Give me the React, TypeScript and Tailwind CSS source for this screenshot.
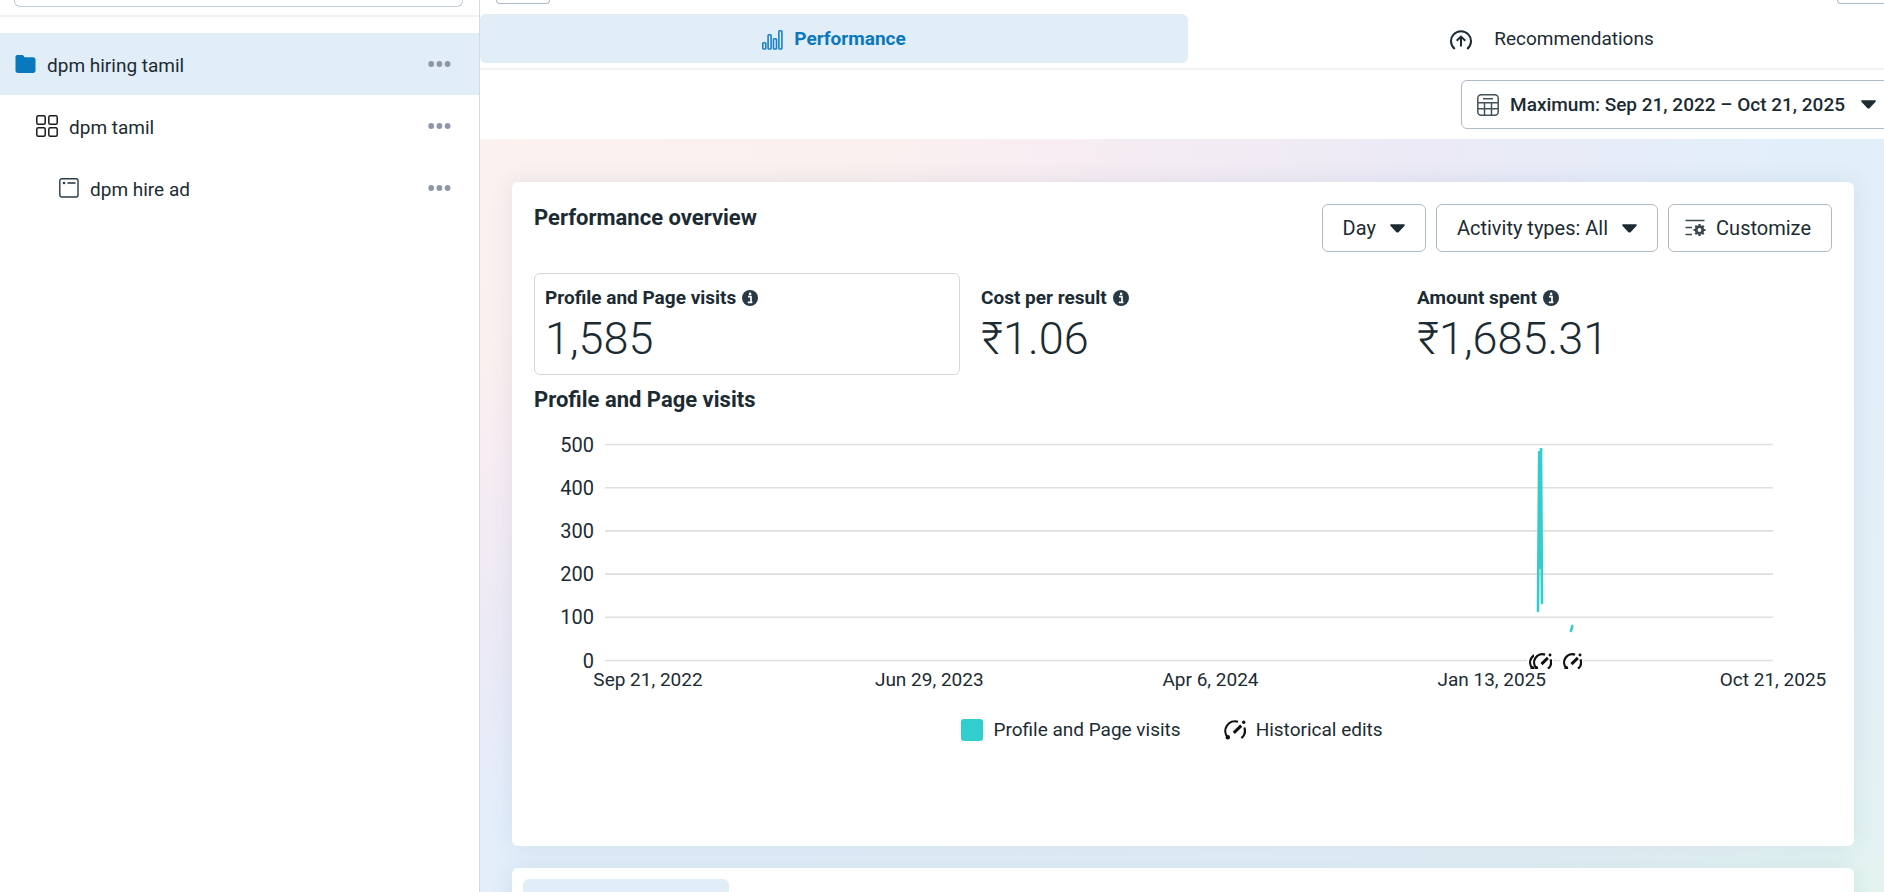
import React from 'react';

const FONT = "font-['Roboto','Noto_Sans',sans-serif]";

type NodeProps = { label: string; icon: React.ReactNode; indent: string; selected?: boolean };

function TreeRow({ label, icon, indent, selected }: NodeProps) {
  return (
    <li className={`flex h-[62px] items-center pr-7 ${indent} ${selected ? 'bg-[#e1edf7]' : ''}`}>
      <a href="#" aria-current={selected ? 'page' : undefined} className="flex flex-1 items-center gap-[11px]">
        {icon}
        <span className="pt-1 text-[19px] leading-6">{label}</span>
      </a>
      <button type="button" aria-label={`More actions for ${label}`}>
        <svg width="23" height="6" viewBox="0 0 23 6" fill="#8f97a6">
          <circle cx="3.2" cy="3" r="2.9" />
          <circle cx="11.4" cy="3" r="2.9" />
          <circle cx="19.6" cy="3" r="2.9" />
        </svg>
      </button>
    </li>
  );
}

function FolderIcon() {
  return (
    <svg width="21" height="18" viewBox="0 0 21 18" fill="#0a78be">
      <path d="M2.5 0h4.6c.8 0 1.3.5 1.7 1.2l.6 1h8.6c1.6 0 2.5.9 2.5 2.5v10.8c0 1.6-.9 2.5-2.5 2.5h-15C1.4 18 .5 17.1.5 15.5V2c0-1.3.7-2 2-2z" />
    </svg>
  );
}

function GridIcon() {
  return (
    <svg width="22" height="22" viewBox="0 0 22 22" fill="none" stroke="#1c1c1c" strokeWidth="1.5">
      <rect x=".8" y=".8" width="8.4" height="8.4" rx="1.5" />
      <rect x="12.8" y=".8" width="8.4" height="8.4" rx="1.5" />
      <rect x=".8" y="12.8" width="8.4" height="8.4" rx="1.5" />
      <rect x="12.8" y="12.8" width="8.4" height="8.4" rx="1.5" />
    </svg>
  );
}

function AdIcon() {
  return (
    <svg width="20" height="20" viewBox="0 0 20 20" fill="none" stroke="#2d3b45" strokeWidth="1.4">
      <rect x=".8" y=".8" width="18.2" height="18.2" rx="2" />
      <path d="M8.5 5h8" strokeWidth="1.6" />
      <circle cx="5" cy="5" r="1.3" fill="#2d3b45" stroke="none" />
    </svg>
  );
}

function BarsIcon() {
  return (
    <svg width="21" height="20" viewBox="0 0 21 20" fill="none" stroke="#1b83c6" strokeWidth="1.6">
      <rect x=".8" y="12.8" width="3" height="6.2" rx=".7" />
      <rect x="6.1" y="4.8" width="3" height="14.2" rx=".7" />
      <rect x="11.5" y="8.8" width="3" height="10.2" rx=".7" />
      <rect x="16.9" y=".8" width="3" height="18.2" rx=".7" />
    </svg>
  );
}

function GaugeUpIcon() {
  return (
    <svg width="22" height="20" viewBox="0 0 22 20" fill="none" stroke="#1c2b33" strokeWidth="2">
      <path d="M4.8 19A10 10 0 1 1 17.2 19" />
      <path d="M11 16.5V7M6.7 10.8L11 6.6l4.300 4.200" />
    </svg>
  );
}

function CalendarIcon() {
  return (
    <svg width="22" height="22" viewBox="0 0 22 22" fill="none" stroke="#44525b" strokeWidth="1.5">
      <rect x=".8" y=".8" width="20.4" height="20.4" rx="3.5" />
      <path d="M6 4.8h10M1 8.8h20M1 14.8h20M7.5 8.8V21M14.5 8.8V21" />
    </svg>
  );
}

function Caret() {
  return (
    <svg width="15" height="9" viewBox="0 0 14 9" preserveAspectRatio="none" fill="#1c2b33">
      <path d="M1 .3h12c.9 0 1.2.9.6 1.5L8.2 7.9c-.7.7-1.7.7-2.4 0L.4 1.8C-.2 1.2.1.3 1 .3z" />
    </svg>
  );
}

function CustomizeIcon() {
  return (
    <svg width="21" height="18" viewBox="0 0 21 18" fill="none" stroke="#3b4850" strokeWidth="1.6">
      <path d="M.5 1.5h19M.5 8.5h6.5M.5 15.5h6.5" />
      <circle cx="14.5" cy="11" r="3.300" strokeWidth="2.800" />
      <path
        d="M14.5 5v2M14.5 15v2M8.500 11h2M18.500 11h2M10.300 6.800l1.400 1.400M17.300 13.800l1.400 1.400M10.300 15.200l1.400-1.400M17.300 8.200l1.400-1.400"
        strokeWidth="2.200"
      />
    </svg>
  );
}

function InfoIcon() {
  return (
    <svg width="16" height="16" viewBox="0 0 16 16">
      <circle cx="8" cy="8" r="8" fill="#283943" />
      <path d="M6 6.7h3v5.600M5.800 12.300h4.600" fill="none" stroke="#fff" strokeWidth="1.700" />
      <circle cx="8.1" cy="3.9" r="1.300" fill="#fff" />
    </svg>
  );
}

function GaugeShape({ weight = 2.2 }: { weight?: number }) {
  return (
    <g fill="none" stroke="#111" strokeWidth={weight}>
      <path d="M14 1.8A9.700 9.700 0 0 0 3.800 17.500" />
      <path d="M20.3 7.500a9.700 9.700 0 0 1-2.900 10.700" />
      <path d="M9.8 12.900L17.200 5.600" strokeWidth={weight + 0.8} />
      <circle cx="19.7" cy="2.200" r="1.700" fill="#111" stroke="none" />
      <circle cx="3.8" cy="17.300" r="2.200" fill="#111" stroke="none" />
    </g>
  );
}

function Metric({ label, value, selected }: { label: string; value: string; selected?: boolean }) {
  return (
    <button
      type="button"
      className={`flex h-[102px] flex-col items-start rounded-md border px-2.5 pt-3 text-left ${
        selected ? 'border-[#d3d9df]' : 'border-transparent'
      }`}
    >
      <span className="flex items-center gap-1.5 text-[19px] leading-6 font-bold">
        {label}
        <InfoIcon />
      </span>
      <span className="mt-1 text-[45px] leading-[50px] font-[350]">{value}</span>
    </button>
  );
}

const Y_TICKS = [500, 400, 300, 200, 100, 0];
const X_TICKS = ['Sep 21, 2022', 'Jun 29, 2023', 'Apr 6, 2024', 'Jan 13, 2025', 'Oct 21, 2025'];
const EDIT_MARKS = [995, 999, 1029];

function VisitsChart() {
  return (
    <svg viewBox="0 0 1298 276" className="mt-2.5 w-full" role="img" aria-label="Profile and Page visits by day">
      {Y_TICKS.map((t, i) => {
        const y = 20.5 + i * 43.2;
        return (
          <g key={t}>
            <line x1="71" x2="1239" y1={y} y2={y} stroke="#dddfe1" strokeWidth="1.6" />
            <text x="60" y={y + 7} textAnchor="end" fontSize="20" fill="#1c2b33">
              {t}
            </text>
          </g>
        );
      })}
      {X_TICKS.map((t, i) => (
        <text key={t} x={114 + i * 281.25} y="262" textAnchor="middle" fontSize="19" fill="#1c2b33">
          {t}
        </text>
      ))}
      <g fill="none" stroke="#32cdcd" strokeWidth="2.6" strokeLinecap="round">
        <path d="M1004 187L1005.200 27L1006.300 145L1007 24L1008 179" />
        <path d="M1037 207L1038.300 202" />
      </g>
      <rect x="993" y="229" width="26" height="16" fill="#fff" />
      <rect x="1026" y="229" width="23" height="16" fill="#fff" />
      {EDIT_MARKS.map((x) => (
        <g key={x}>
          <rect x={x + 1} y="229" width="18" height="16" fill="#fff" />
          <svg x={x} y="229" width="19" height="16" viewBox="0 0 22 18.500">
            <GaugeShape weight={2.6} />
          </svg>
        </g>
      ))}
    </svg>
  );
}

const BUTTON = 'flex items-center rounded-md border border-[#b0bac6] bg-white leading-6';

export default function App() {
  return (
    <div className={`flex h-screen overflow-hidden bg-white text-[#1c2b33] ${FONT}`}>
      <aside className="flex w-[480px] shrink-0 flex-col border-r border-[#d6dade]">
        <div className="h-[17px] border-b-2 border-[#f0f1f2] pr-4 pl-3.5">
          <div className="h-[7px] rounded-b-md border border-t-0 border-[#c3cbd4]" />
        </div>
        <ul className="pt-4">
          <TreeRow label="dpm hiring tamil" icon={<FolderIcon />} indent="pl-[15px]" selected />
          <TreeRow label="dpm tamil" icon={<GridIcon />} indent="pl-9" />
          <TreeRow label="dpm hire ad" icon={<AdIcon />} indent="pl-[59px]" />
        </ul>
      </aside>

      <main className="flex min-w-0 flex-1 flex-col">
        <div className="flex h-3.5 shrink-0 items-start justify-between pl-4">
          <div className="h-1 w-[54px] rounded-b-md border border-t-0 border-[#b0bac6]" />
          <div className="h-1 w-[47px] rounded-bl-md border-b border-l border-[#b0bac6]" />
        </div>
        <nav className="-mr-[22px] flex shrink-0 gap-2.5 border-b-2 border-[#f0f1f2] pb-[5px]">
          <a
            href="#"
            aria-current="page"
            className="flex h-[49px] flex-1 items-center justify-center gap-[11px] rounded-md bg-[#e1edf7] pt-0.5 text-[19px] font-bold text-[#0a78be]"
          >
            <BarsIcon />
            Performance
          </a>
          <a href="#" className="flex h-[49px] flex-1 items-center justify-center gap-[22px] pt-0.5 text-[19px]">
            <GaugeUpIcon />
            Recommendations
          </a>
        </nav>
        <div className="-mr-2 flex h-[69px] shrink-0 items-start justify-end pt-2.5">
          <button type="button" className={`${BUTTON} h-[49px] px-[15px] text-[19px] font-medium`}>
            <CalendarIcon />
            <span className="mr-4 ml-[11px]">Maximum: Sep 21, 2022 – Oct 21, 2025</span>
            <Caret />
          </button>
        </div>

        <div className="min-h-0 flex-1 overflow-hidden bg-[radial-gradient(ellipse_at_top_left,#fbf1ef_0%,#faf0ef_20%,#f8edf2_28%,#ebeaf6_48%,#e2effa_66%,#e3f0f6_86%,#e3f4f0_100%)] pt-[43px] pr-[30px] pl-8">
          <section className="flex h-[664px] flex-col rounded-md bg-white px-[22px] pt-[22px] shadow-[0_0_22px_rgba(50,80,130,0.10)]">
            <div className="flex justify-between">
              <h2 className="text-[22px] leading-7 font-bold">Performance overview</h2>
              <div className="flex gap-2.5 text-[20px]">
                <button type="button" className={`${BUTTON} h-12 gap-3.5 px-5`}>
                  Day
                  <Caret />
                </button>
                <button type="button" className={`${BUTTON} h-12 gap-3.5 px-5`}>
                  Activity types: All
                  <Caret />
                </button>
                <button type="button" className={`${BUTTON} h-12 gap-2.5 px-4 pr-5`}>
                  <CustomizeIcon />
                  Customize
                </button>
              </div>
            </div>
            <div className="mt-[21px] grid grid-cols-3 gap-2.5">
              <Metric label="Profile and Page visits" value="1,585" selected />
              <Metric label="Cost per result" value="₹1.06" />
              <Metric label="Amount spent" value="₹1,685.31" />
            </div>
            <h3 className="mt-[11px] text-[22px] leading-7 font-bold">Profile and Page visits</h3>
            <VisitsChart />
            <div className="mt-[18px] flex justify-center gap-[43px] pr-[22px] text-[19px] leading-6">
              <span className="flex items-center gap-2.5">
                <span className="size-[22px] rounded-[3px] bg-[#32cdcd]" />
                Profile and Page visits
              </span>
              <span className="flex items-center gap-2.5">
                <svg width="22" height="20" viewBox="0 0 22 20">
                  <GaugeShape />
                </svg>
                Historical edits
              </span>
            </div>
          </section>
          <section className="mt-[22px] h-40 rounded-md bg-white p-[11px] shadow-[0_0_22px_rgba(50,80,130,0.10)]">
            <div className="h-12 w-[206px] rounded-md bg-[#e1edf7]" />
          </section>
        </div>
      </main>
    </div>
  );
}
